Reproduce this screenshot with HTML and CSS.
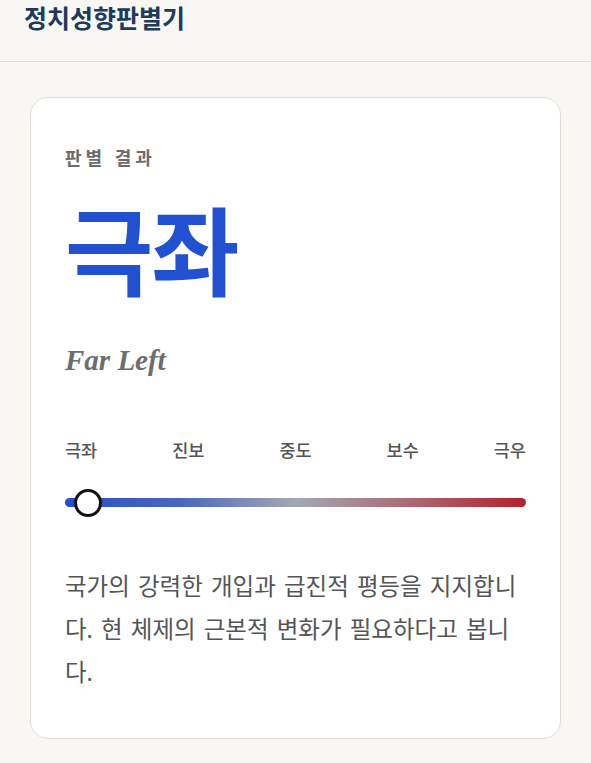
FILE: index.html
```html
<!DOCTYPE html>
<html lang="ko">
<head>
    <meta charset="UTF-8">
    <meta name="viewport" content="width=device-width, initial-scale=1.0">
    <title>정치성향판별기</title>
    <link rel="stylesheet" href="styles.css">
</head>
<body>
    <!-- Header -->
    <header class="site-header">
        <h1 class="site-title">정치성향판별기</h1>
    </header>

    <!-- Result Card -->
    <main class="content">
        <section class="result-card">
            <p class="result-label">판별 결과</p>
            <h2 class="result-name">극좌</h2>
            <p class="result-english">Far Left</p>

            <div class="scale">
                <div class="scale-labels">
                    <span>극좌</span>
                    <span>진보</span>
                    <span>중도</span>
                    <span>보수</span>
                    <span>극우</span>
                </div>
                <div class="scale-track">
                    <div class="scale-thumb" style="left: 5%;"></div>
                </div>
            </div>

            <p class="result-desc">국가의 강력한 개입과 급진적 평등을 지지합니다. 현 체제의 근본적 변화가 필요하다고 봅니다.</p>
        </section>
    </main>
</body>
</html>
```

FILE: styles.css
```css
* {
    margin: 0;
    padding: 0;
    box-sizing: border-box;
    font-family: 'Noto Sans', 'Noto Sans CJK KR', sans-serif;
}

body {
    background: #f8f7f4;
    min-height: 100vh;
    overflow: hidden;
}

.site-header {
    height: 62px;
    padding: 0 24px;
    border-bottom: 1px solid #e2dfd9;
    display: flex;
    align-items: flex-start;
}

.site-title {
    font-size: 25px;
    font-weight: 600;
    color: #203a5c;
    line-height: 37px;
}

.content {
    padding: 35px 30px 0 30px;
}

.result-card {
    background: #fff;
    border: 1px solid #e0ddd7;
    border-radius: 18px;
    padding: 48px 34px 50px 34px;
    height: 642px;
}

.result-label {
    font-size: 18px;
    font-weight: 700;
    color: #6b6b6b;
    letter-spacing: 4px;
    line-height: 24px;
}

.result-name {
    font-size: 96px;
    font-weight: 700;
    color: #2150d1;
    line-height: 120px;
    margin-top: 21px;
    letter-spacing: -2px;
}

.result-english {
    font-family: 'Liberation Serif', serif;
    font-style: italic;
    font-weight: 700;
    font-size: 29px;
    color: #6d6d6d;
    line-height: 36px;
    margin-top: 31px;
}

.scale {
    margin-top: 61px;
}

.scale-labels {
    display: flex;
    justify-content: space-between;
    font-size: 17.5px;
    font-weight: 500;
    color: #555;
    line-height: 22px;
}

.scale-track {
    position: relative;
    height: 9px;
    margin-top: 37px;
    border-radius: 5px;
    background: linear-gradient(90deg, #2550cc 0%, #4a66bd 25%, #a3a8b3 50%, #ad6873 75%, #b3202a 100%);
}

.scale-thumb {
    position: absolute;
    top: 50%;
    width: 28px;
    height: 28px;
    margin-left: -14px;
    margin-top: -14px;
    border-radius: 50%;
    background: #fff;
    border: 3px solid #111;
}

.result-desc {
    margin-top: 58px;
    font-size: 23.5px;
    font-weight: 400;
    color: #555;
    line-height: 43px;
    word-spacing: 2px;
}
```
